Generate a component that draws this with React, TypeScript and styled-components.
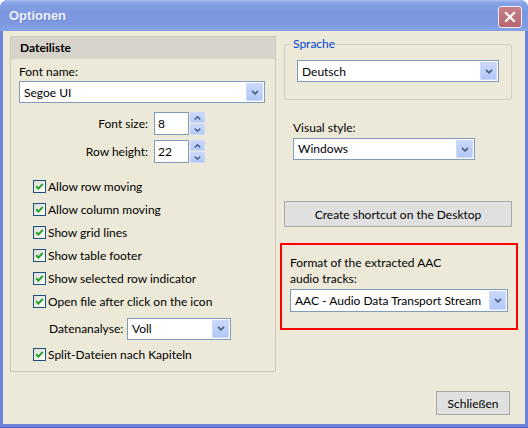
import React from "react";
import styled, { createGlobalStyle } from "styled-components";

const GlobalStyle = createGlobalStyle`
  html, body { margin: 0; padding: 0; background: #ffffff; }
  body { font-family: Lato, "Open Sans", sans-serif; font-size: 12px; color: #000; }
  * { box-sizing: border-box; }
`;

const Window = styled.div`
  width: 528px;
  height: 428px;
  display: flex;
  flex-direction: column;
  background: #6f82d9;
  border-radius: 8px 8px 0 0;
  overflow: hidden;
  border-bottom: 1px solid #4c59c4;
`;

const TitleBar = styled.div`
  height: 31px;
  flex: none;
  display: flex;
  align-items: center;
  justify-content: space-between;
  padding: 0 6px 0 9px;
  background: linear-gradient(#a9bff2 0px, #86a2e6 3px, #7c98e0 12px, #7b98e0 22px, #87a4e8 31px);
`;

const Title = styled.span`
  font-family: "Liberation Sans", Arial, sans-serif;
  font-weight: bold;
  font-size: 13px;
  color: #eef2fd;
  text-shadow: 1px 1px 0 #6a82cf;
`;

const CloseButton = styled.div`
  width: 24px;
  height: 22px;
  border: 1px solid #e9ecf7;
  border-radius: 3px;
  background: linear-gradient(#c77f88, #b86670);
  display: flex;
  align-items: center;
  justify-content: center;
  margin-top: 3px;
`;

const Body = styled.div`
  flex: 1;
  margin: 0 3px 3px 3px;
  background: #ece9d8;
  display: flex;
  flex-direction: column;
  padding: 5px 7px 9px 7px;
`;

const MainRow = styled.div`
  display: flex;
  gap: 4px;
  align-items: flex-start;
`;

const LeftPanel = styled.div`
  width: 266px;
  height: 336px;
  border: 1px solid #cdc9ba;
`;

const PanelHeader = styled.div`
  height: 22px;
  line-height: 22px;
  background: #d7d4cb;
  padding-left: 9px;
  font-weight: bold;
`;

const PanelContent = styled.div`
  padding: 5px 10px 0 8px;
`;

const FieldLabel = styled.div<{ $indent?: number; $top?: number }>`
  line-height: 16px;
  margin-left: ${(p) => p.$indent ?? 0}px;
  margin-top: ${(p) => p.$top ?? 0}px;
`;

const ComboBox = styled.div<{ $width?: number; $height?: number; $top?: number }>`
  width: ${(p) => (p.$width ? `${p.$width}px` : "100%")};
  height: ${(p) => p.$height ?? 22}px;
  margin-top: ${(p) => p.$top ?? 0}px;
  border: 1px solid #7f9db9;
  background: #fff;
  display: flex;
  align-items: stretch;
  flex: none;
`;

const ComboText = styled.span`
  flex: 1;
  padding-left: 4px;
  display: flex;
  align-items: center;
  white-space: nowrap;
  overflow: hidden;
`;

const DropButton = styled.span`
  width: 17px;
  margin: 1px;
  border: 1px solid #c9d8fc;
  border-radius: 1px;
  background: linear-gradient(#c9d8fd, #b3c8f6);
  display: flex;
  align-items: center;
  justify-content: center;
`;

const SpinRow = styled.div<{ $top: number }>`
  display: flex;
  align-items: center;
  margin-top: ${(p) => p.$top}px;
  height: 23px;
`;

const SpinLabel = styled.span`
  width: 129px;
  text-align: right;
`;

const SpinInput = styled.div`
  width: 35px;
  height: 23px;
  margin-left: 6px;
  border: 1px solid #7f9db9;
  background: #fff;
  padding-left: 3px;
  display: flex;
  align-items: center;
`;

const SpinButtons = styled.div`
  margin-left: 1px;
  width: 15px;
  height: 23px;
  display: flex;
  flex-direction: column;
  gap: 1px;
`;

const SpinHalf = styled.span`
  flex: 1;
  border: 1px solid #c9d8fc;
  border-radius: 1px;
  background: linear-gradient(#cbd9fd, #b5c9f6);
  display: flex;
  align-items: center;
  justify-content: center;
`;

const CheckList = styled.div`
  margin-top: 12px;
  padding-left: 14px;
`;

const CheckRow = styled.div`
  height: 23px;
  display: flex;
  align-items: center;
  gap: 2px;
`;

const CheckBox = styled.span`
  width: 13px;
  height: 13px;
  border: 1px solid #1c5180;
  background: linear-gradient(135deg, #dcdcd7, #ffffff);
  display: flex;
  align-items: center;
  justify-content: center;
  flex: none;
`;

const ChoiceRow = styled.div`
  height: 30px;
  padding-top: 1px;
  display: flex;
  align-items: center;
  padding-left: 16px;
`;

const ChoiceLabel = styled.span`
  width: 78px;
`;

const RightColumn = styled.div`
  width: 238px;
  display: flex;
  flex-direction: column;
`;

const GroupBox = styled.fieldset`
  margin: 1px 6px 0 4px;
  border: 1px solid #d0d0bf;
  border-radius: 3px;
  padding: 0 12px 17px 12px;
  min-width: 0;
`;

const Legend = styled.legend`
  color: #0046d5;
  padding: 0 1px;
  margin-left: -5px;
  line-height: 14px;
`;

const PushButton = styled.div<{ $width?: number; $height: number }>`
  ${(p) => (p.$width ? `width: ${p.$width}px;` : "")}
  height: ${(p) => p.$height}px;
  background: #e0e0e0;
  border: 1px solid #a8a8a8;
  display: flex;
  align-items: center;
  justify-content: center;
`;

const ShortcutWrap = styled.div`
  margin: 41px 6px 0 4px;
`;

const RedBox = styled.div`
  margin-top: 16px;
  height: 87px;
  border: 2px solid #ff0000;
  padding: 10px 8px 0 8px;
`;

const Footer = styled.div`
  margin-top: auto;
  display: flex;
  justify-content: flex-end;
  padding-right: 8px;
`;

const Chevron = () => (
  <svg width="8" height="5" viewBox="0 0 8 5">
    <path d="M1 0.8 L4 3.8 L7 0.8" fill="none" stroke="#4d6185" strokeWidth="1.8" />
  </svg>
);

const SpinArrow = ({ up }: { up?: boolean }) => (
  <svg width="7" height="4" viewBox="0 0 7 4">
    <path
      d={up ? "M0.8 3.4 L3.5 0.8 L6.2 3.4" : "M0.8 0.6 L3.5 3.2 L6.2 0.6"}
      fill="none"
      stroke="#4d6185"
      strokeWidth="1.5"
    />
  </svg>
);

const Check = () => (
  <svg width="9" height="9" viewBox="0 0 9 9">
    <path d="M1.2 4.3 L3.4 6.6 L7.8 1.9" fill="none" stroke="#21a121" strokeWidth="2" />
  </svg>
);

const Combo = ({ value, width, height, top }: { value: string; width?: number; height?: number; top?: number }) => (
  <ComboBox $width={width} $height={height} $top={top}>
    <ComboText>{value}</ComboText>
    <DropButton>
      <Chevron />
    </DropButton>
  </ComboBox>
);

const Spin = ({ label, value, top }: { label: string; value: string; top: number }) => (
  <SpinRow $top={top}>
    <SpinLabel>{label}</SpinLabel>
    <SpinInput>{value}</SpinInput>
    <SpinButtons>
      <SpinHalf>
        <SpinArrow up />
      </SpinHalf>
      <SpinHalf>
        <SpinArrow />
      </SpinHalf>
    </SpinButtons>
  </SpinRow>
);

const CheckItem = ({ label }: { label: string }) => (
  <CheckRow>
    <CheckBox>
      <Check />
    </CheckBox>
    <span>{label}</span>
  </CheckRow>
);

export default function App() {
  return (
    <>
      <GlobalStyle />
      <Window>
        <TitleBar>
          <Title>Optionen</Title>
          <CloseButton>
            <svg width="12" height="12" viewBox="0 0 12 12">
              <path d="M2 2 L10 10 M10 2 L2 10" stroke="#ffffff" strokeWidth="2.2" strokeLinecap="square" />
            </svg>
          </CloseButton>
        </TitleBar>
        <Body>
          <MainRow>
            <LeftPanel>
              <PanelHeader>Dateiliste</PanelHeader>
              <PanelContent>
                <FieldLabel>Font name:</FieldLabel>
                <Combo value="Segoe UI" top={1} />
                <Spin label="Font size:" value="8" top={9} />
                <Spin label="Row height:" value="22" top={5} />
                <CheckList>
                  <CheckItem label="Allow row moving" />
                  <CheckItem label="Allow column moving" />
                  <CheckItem label="Show grid lines" />
                  <CheckItem label="Show table footer" />
                  <CheckItem label="Show selected row indicator" />
                  <CheckItem label="Open file after click on the icon" />
                  <ChoiceRow>
                    <ChoiceLabel>Datenanalyse:</ChoiceLabel>
                    <Combo value="Voll" width={104} />
                  </ChoiceRow>
                  <CheckItem label="Split-Dateien nach Kapiteln" />
                </CheckList>
              </PanelContent>
            </LeftPanel>
            <RightColumn>
              <GroupBox>
                <Legend>Sprache</Legend>
                <Combo value="Deutsch" width={202} top={9} />
              </GroupBox>
              <FieldLabel $indent={13} $top={20}>
                Visual style:
              </FieldLabel>
              <FieldLabel $indent={13}>
                <Combo value="Windows" width={182} top={2} />
              </FieldLabel>
              <ShortcutWrap>
                <PushButton $height={26}>Create shortcut on the Desktop</PushButton>
              </ShortcutWrap>
              <RedBox>
                <FieldLabel>
                  Format of the extracted AAC
                  <br />
                  audio tracks:
                </FieldLabel>
                <Combo value="AAC - Audio Data Transport Stream" width={218} height={23} top={2} />
              </RedBox>
            </RightColumn>
          </MainRow>
          <Footer>
            <PushButton $width={74} $height={24}>
              Schließen
            </PushButton>
          </Footer>
        </Body>
      </Window>
    </>
  );
}
